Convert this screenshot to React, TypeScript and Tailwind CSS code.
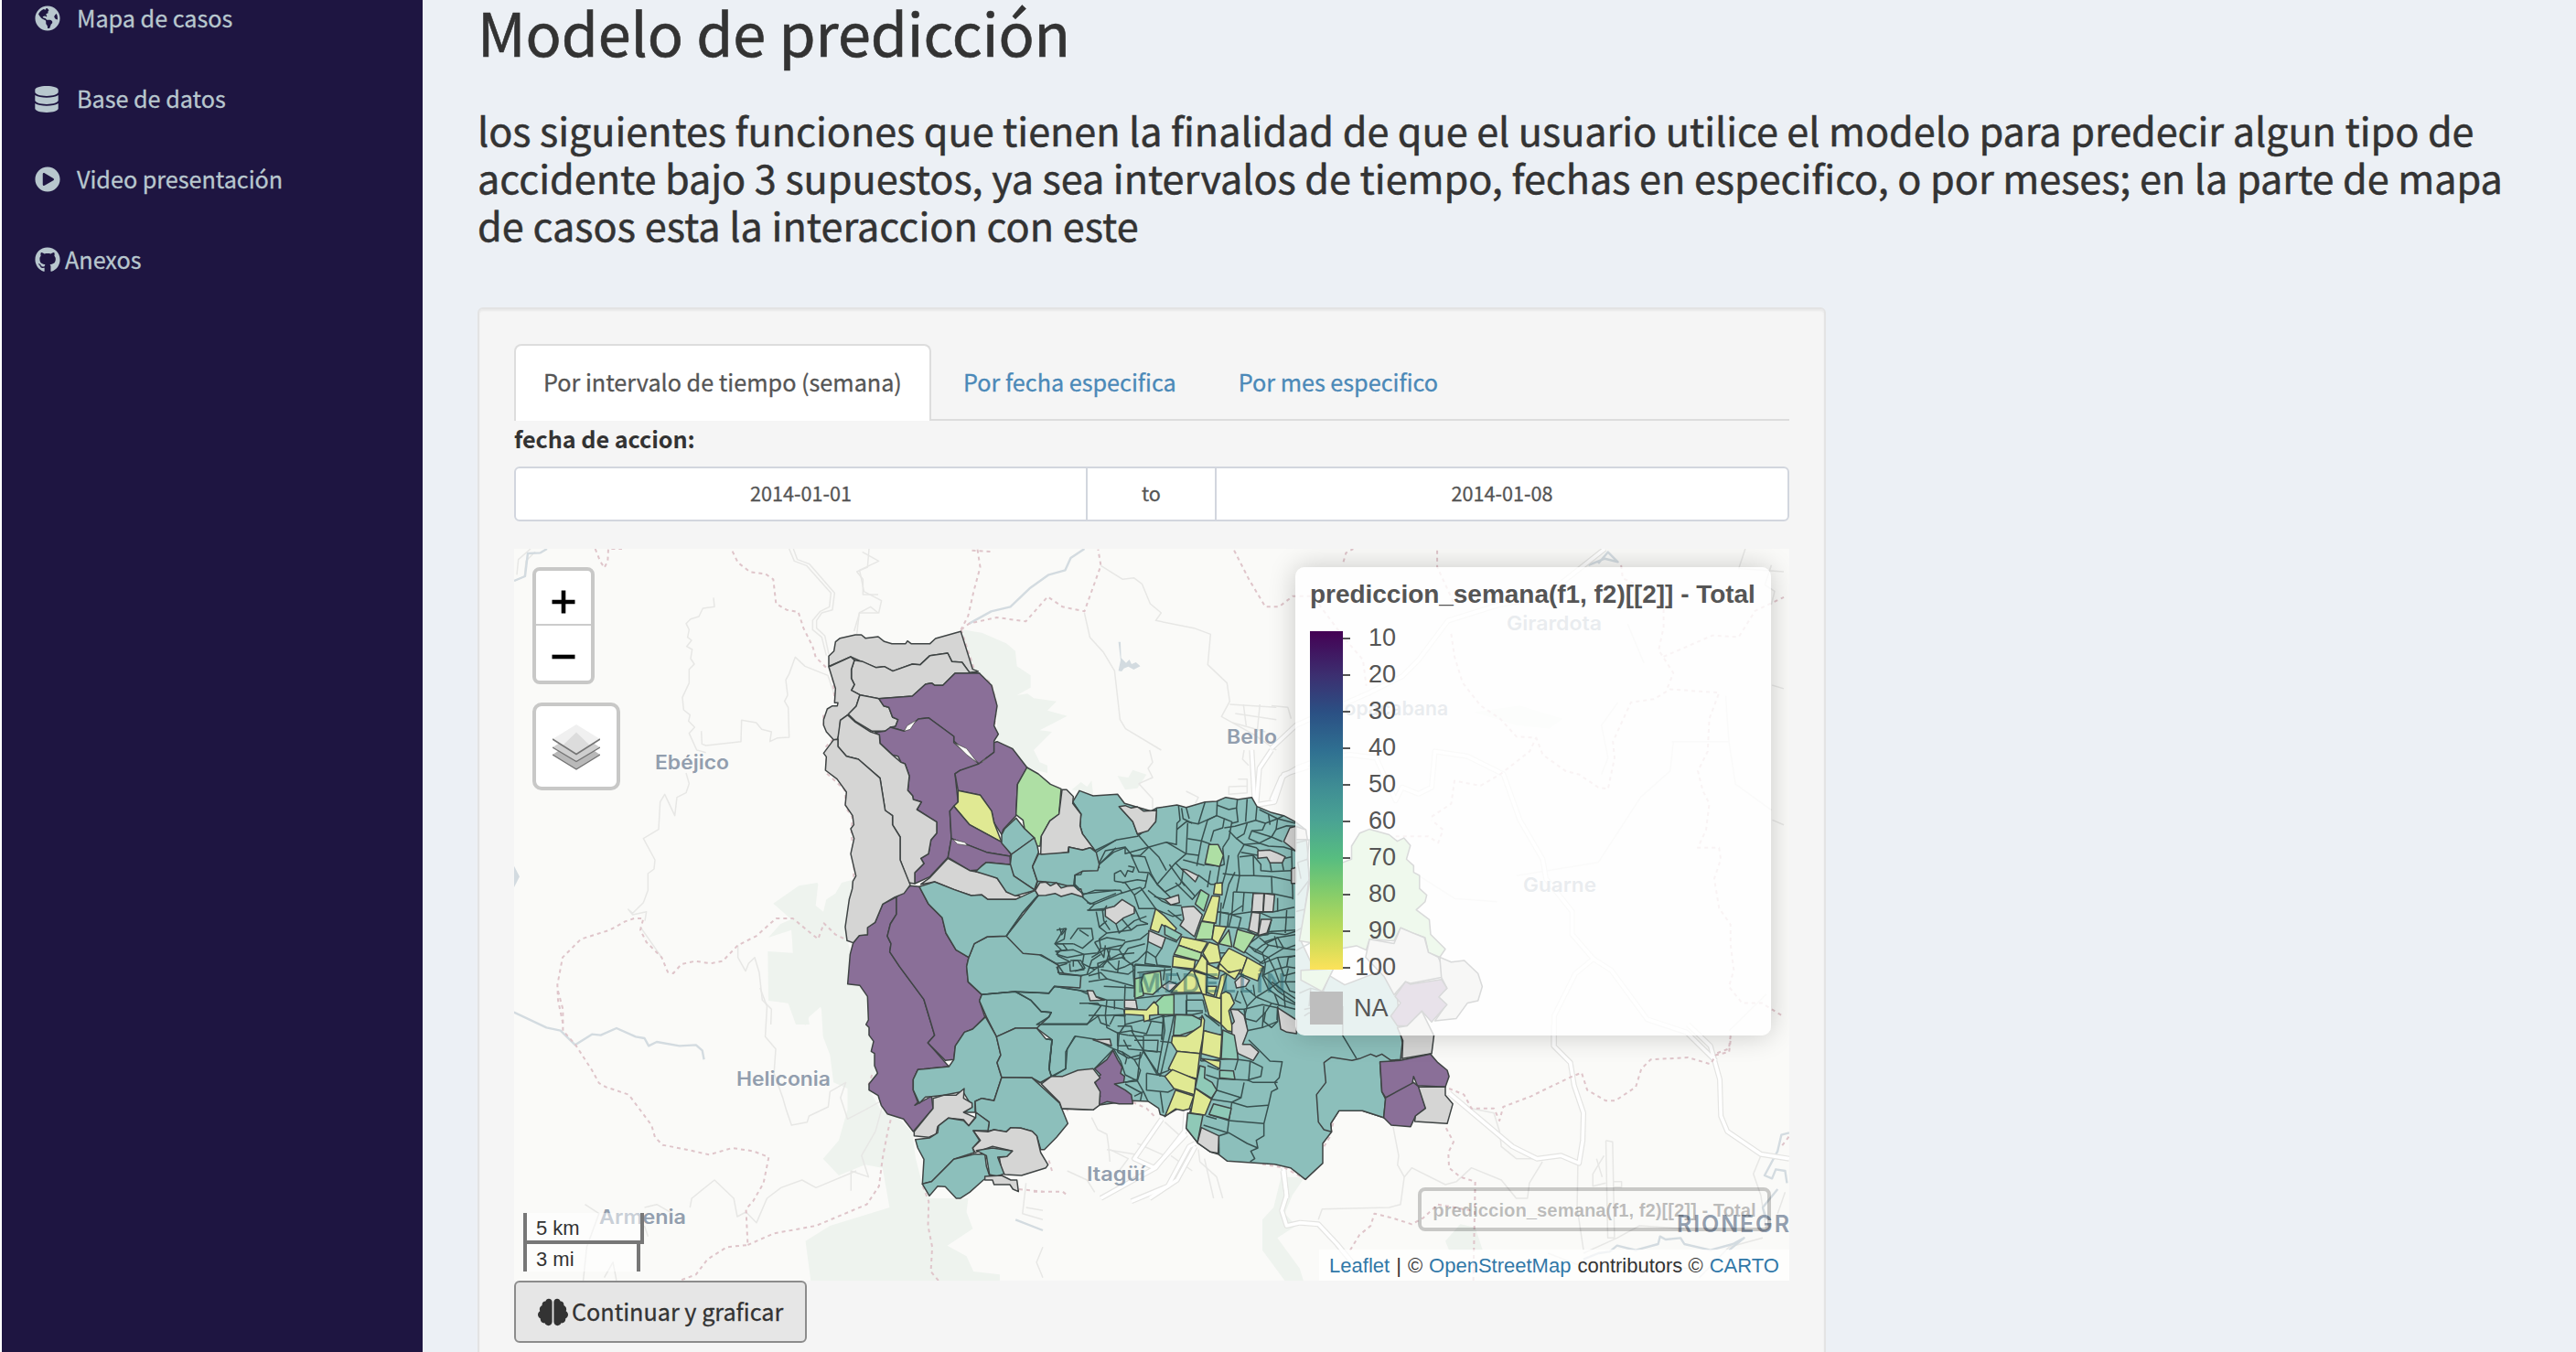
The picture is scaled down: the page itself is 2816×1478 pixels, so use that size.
import React from "react";
import { FaBrain, FaDatabase, FaGithub, FaGlobeAmericas, FaPlayCircle } from "react-icons/fa";

type Region = [string, string];

const TEAL = "#8cbfbb";
const PURPLE = "#8a6f98";
const GRAY = "#d5d5d4";
const YELLOW = "#e0e993";
const GREEN = "#aedfa4";
const MINT = "#8fc9b7";
const FERN = "#9ad8a8";

/* Each sheet of the map has its own local grid, placed with a transform. */
const NW = "translate(860 660) scale(.33333)";
const SW = "translate(860 960) scale(.33333)";
const N = "translate(1130 820) scale(.33333)";
const S = "translate(1130 1050) scale(.33333)";
const C = "translate(1190 950) scale(.33333)";
const E = "translate(1390 600) scale(.35714)";
const SE = "translate(1380 1120) scale(.40816 .33333)";
const W = "translate(560 600) scale(.33333)";
const TOP = "translate(520 320) scale(.59949 .33333)";
const BL = "translate(540 1080) scale(.38265 .33333)";

const base =
  "938,650 960,613 1005,630 1085,625 1108,655 1195,680 1213,670 1280,660 1310,668 1372,650 1410,648 1440,635 1480,642 1525,635 1542,665 1590,685 1630,695 1668,715 1702,741 1708,805 1713,902 1686,1105 1761,1266 1780,1220 1830,1250 1960,1200 2002,1287 2013,1406 2019,1440 2013,1495 1946,1500 1958,1685 1888,1663 1811,1663 1784,1705 1787,1732 1758,1770 1758,1835 1701,1888 1652,1850 1600,1838 1445,1828 1415,1805 1390,1798 1350,1770 1310,1720 1325,1657 1285,1655 1240,1680 1225,1675 1220,1655 1185,1632 1130,1630 1020,1645 1005,1660 902,1657 895,1638 832,1570 868,1550 860,1525 870,1430 820,1392 750,1272 860,1277 720,1090 825,957 815,940 822,912 806,862 835,822 1010,808 970,755 962,728 965,690";

const northWest: Region[] = [
  [GRAY, "138,205 138,172 155,155 160,125 175,113 225,102 245,102 258,113 300,108 320,124 345,131 390,131 396,122 408,131 470,131 488,114 571,91 610,215 628,222 600,226 575,192 542,190 528,162 470,170 438,200 412,198 348,221 320,206 292,209 250,192 210,174"],
  [GRAY, "222,185 250,190 292,209 320,206 348,221 412,198 438,200 470,170 528,162 542,190 575,192 600,226 632,228 552,228 512,268 486,268 475,260 455,264 412,303 302,311 240,299 212,284 222,265 212,245 212,215"],
  [GRAY, "138,207 210,174 222,185 212,215 212,245 222,265 212,284 240,299 228,336 200,365 176,382 172,430 166,445 154,446 130,420 121,398 121,380 133,345 150,335 166,335 168,325 157,325 160,278"],
  [GRAY, "240,299 302,311 318,335 335,340 347,372 365,380 357,402 322,418 280,418 225,385 202,362 228,336"],
  [PURPLE, "302,311 412,303 455,264 475,260 486,268 512,268 552,228 632,228 672,268 690,335 680,400 694,428 680,450 680,487 630,525 548,450 548,435 465,374 432,378 385,418 340,405 357,402 365,380 347,372 335,340 318,335"],
  [PURPLE, "290,422 322,418 340,405 385,418 432,378 465,374 548,435 548,455 630,525 610,540 570,546 552,558 562,650 535,680 540,770 529,832 470,895 420,918 420,882 450,852 440,835 465,820 473,775 492,752 492,716 427,675 442,650 415,642 413,630 397,612 402,565 388,525 375,520 365,500 347,496 306,458 304,432"],
  [PURPLE, "690,452 740,475 788,537 757,592 752,695 710,740 705,757 680,718 672,680 635,628 562,613 552,558 570,546 630,525 680,487 680,455"],
  [YELLOW, "562,613 635,628 672,680 680,718 705,782 600,725 548,664 562,650"],
  [PURPLE, "548,664 600,725 705,782 736,822 732,828 655,815 540,770 535,680"],
  [PURPLE, "540,770 655,815 732,828 734,856 655,848 640,860 630,873 600,875 529,832"],
  [GRAY, "200,365 225,388 275,420 304,430 306,458 347,496 375,520 388,525 402,565 397,612 413,630 415,642 442,650 427,675 492,716 492,752 473,775 465,820 440,835 450,852 420,882 420,918 400,915 372,840 372,765 347,725 347,695 323,678 306,572 235,510 196,500 168,468 168,440 176,382"],
  [GRAY, "154,446 168,445 168,468 196,500 235,510 306,572 323,678 347,695 347,725 372,765 372,840 405,922 385,950 355,962 315,985 290,1045 265,1062 265,1085 238,1088 218,1112 198,1105 192,1060 205,970 215,935 217,910 227,893 210,820 221,770 210,738 220,725 216,695 192,660 196,618 165,575 127,546 130,502 121,490"],
  [GREEN, "788,537 825,558 865,592 900,607 893,690 863,712 835,762 831,795 818,795 812,768 780,738 775,710 752,692 757,592"],
  [GRAY, "903,610 918,610 940,632 938,655 965,690 962,728 970,755 1010,808 995,800 970,808 925,798 922,815 850,825 833,822 835,762 863,712 893,690"],
  [GRAY, "529,835 600,875 655,885 690,900 722,945 770,962 750,970 660,970 640,955 605,957 550,938 485,912 440,920 470,898"],
  [TEAL, "705,757 715,738 752,703 780,738 812,768 737,822 705,785"],
  [TEAL, "737,822 812,768 822,795 826,815 806,862 822,910 812,938 745,893 732,865"],
  [TEAL, "655,848 734,856 745,893 815,940 750,958 720,945 690,900 620,878 640,860"],
  [TEAL, "835,822 925,815 925,798 970,808 995,800 1015,815 1025,855 1020,875 970,877 945,890 942,925 920,925 880,915 822,910 806,862 826,820"],
  [TEAL, "435,928 485,912 550,938 605,957 640,955 660,970 750,970 815,940 825,957 772,1015 720,1090 658,1092 615,1115 597,1160 555,1135 522,1080 510,1030 465,985"],
  [GRAY, "815,940 830,915 850,913 865,925 885,915 900,932 920,926 945,925 955,938 965,935 972,962 935,950 900,960 880,950 850,956 825,957"],
];

const southWest: Region[] = [
  [PURPLE, "360,62 360,118 340,150 330,190 342,215 338,242 370,290 450,398 485,515 463,540 532,618 430,628 415,660 415,695 430,735 420,745 475,715 480,755 415,831 383,790 330,773 310,745 300,713 270,695 270,675 298,640 288,615 288,575 277,568 285,535 270,515 270,490 260,480 268,465 265,388 240,352 200,347 208,250 218,212 238,187 265,185 265,160 290,145 315,85"],
  [PURPLE, "360,62 405,25 435,28 465,85 510,130 522,180 555,235 597,260 590,290 595,340 640,382 632,402 650,455 610,495 583,505 553,550 548,595 520,598 463,540 485,515 450,398 370,290 338,242 342,215 330,190 340,150 360,118"],
  [TEAL, "597,260 615,215 658,192 720,190 775,247 835,252 890,285 890,310 965,320 962,360 930,358 878,355 860,377 750,372 640,382 595,340 590,290"],
  [TEAL, "640,382 750,372 800,400 835,438 868,440 860,455 820,492 750,492 688,520 655,455 632,402"],
  [TEAL, "652,455 688,520 702,580 690,605 705,653 680,730 640,722 618,732 618,768 582,768 608,750 595,728 578,700 515,712 455,718 435,738 415,695 415,660 430,628 532,618 548,595 553,550 583,505 610,495"],
  [TEAL, "688,520 750,492 820,492 850,527 870,530 860,625 868,650 832,670 805,655 705,653 690,605 702,580"],
  [TEAL, "705,653 805,655 895,738 922,805 885,850 845,890 833,890 820,845 805,830 768,820 735,818 720,832 680,825 660,830 664,800 620,768 618,732 640,722 680,730"],
  [GRAY, "480,722 515,712 555,712 582,690 580,722 608,738 608,752 580,768 618,785 597,812 580,792 530,787 495,815 490,840 465,850 418,845 418,831 480,755"],
  [TEAL, "422,857 468,852 495,835 498,812 530,787 580,795 597,812 620,785 620,768 664,800 660,828 612,828 632,860 610,885 615,900 548,922 475,995 445,1003 450,922 430,885"],
  [TEAL, "445,1003 475,995 548,922 615,905 650,905 655,945 665,975 645,990 600,1030 570,1050 556,1050 520,1012 495,1010 468,1042"],
  [GRAY, "612,828 660,832 680,825 720,832 735,818 768,820 805,830 820,845 833,900 857,940 850,950 770,975 715,972 705,960 697,915 722,913 740,895 675,880 618,900 610,885 635,860"],
  [TEAL, "622,893 675,885 740,895 722,913 692,915 713,970 690,978 665,972 655,910"],
  [GRAY, "650,978 705,975 735,990 755,990 760,1028 742,1020 732,1005 680,1005 675,990 650,990"],
];

const north: Region[] = [
  [GRAY, "280,185 300,182 320,190 340,186 360,200 403,198 400,235 375,265 340,275 325,235"],
  [GREEN, "575,310 605,310 622,345 610,382 562,372"],
  [GRAY, "485,390 500,392 540,412 530,432"],
  [FERN, "548,458 575,475 558,528 530,505"],
  [YELLOW, "595,437 618,435 618,475 590,472"],
  [YELLOW, "585,478 610,480 597,568 552,560"],
  [GRAY, "485,515 525,512 553,540 527,612 480,575 492,555"],
  [GREEN, "550,562 592,568 585,620 530,622"],
  [YELLOW, "592,575 632,580 605,635 585,620"],
  [YELLOW, "400,520 430,545 468,585 460,598 420,572 410,598 382,588"],
  [GRAY, "378,592 432,615 420,650 375,628"],
  [MINT, "430,575 485,605 470,625 430,605"],
  [GREEN, "640,590 650,645 608,635"],
  [GREEN, "668,588 728,605 690,665 655,645"],
  [YELLOW, "485,612 570,630 550,665 475,640"],
  [GREEN, "475,640 550,665 545,692 460,670"],
  [YELLOW, "458,675 530,690 525,718 455,710"],
  [GRAY, "235,520 265,512 290,490 330,515 330,535 295,550 270,570 235,545"],
  [GRAY, "430,490 475,475 478,500 450,508"],
  [GRAY, "735,330 775,328 800,338 825,350 815,370 775,370 765,352 735,355"],
  [GRAY, "720,470 755,470 752,530 715,530"],
  [GRAY, "757,470 790,475 785,530 753,530"],
  [GRAY, "715,532 742,535 736,602 705,590"],
  [GRAY, "746,555 780,555 765,600 736,608"],
  [GRAY, "860,250 840,255 820,300 860,332"],
  [GRAY, "860,385 845,390 845,437 860,437"],
  [YELLOW, "575,630 605,640 615,695 575,700 555,665"],
  [YELLOW, "640,650 700,680 680,735 600,718 618,680"],
  [YELLOW, "700,680 752,710 735,757 680,735"],
];

const center: Region[] = [
  [FERN, "152,360 175,355 180,415 152,425"],
  [GREEN, "180,345 235,335 240,385 210,412 180,408 172,372"],
  [YELLOW, "338,332 385,345 385,405 270,405"],
  [GRAY, "240,385 265,368 290,378 265,402"],
  [YELLOW, "388,310 430,330 425,360 388,345"],
  [YELLOW, "345,330 372,282 388,300 388,345"],
  [YELLOW, "345,335 388,348 385,420 372,408"],
  [YELLOW, "435,350 455,340 430,428 418,420"],
  [YELLOW, "388,385 420,385 412,415 388,405"],
  [YELLOW, "425,330 440,335 480,362 500,330 460,340 430,310"],
  [FERN, "218,440 245,415 280,412 280,478 230,478"],
  [YELLOW, "118,460 190,462 215,435 228,450 228,478 200,480 200,495 182,500 180,480 118,476"],
  [GRAY, "118,430 155,430 160,460 118,455"],
  [YELLOW, "375,410 435,425 435,508 395,480"],
  [YELLOW, "435,410 450,402 465,410 478,440 460,465 475,535 455,530 435,510"],
  [GRAY, "465,460 490,462 510,480 522,530 515,550 505,575 530,575 558,600 540,628 490,605 470,560 470,510 478,500"],
  [GRAY, "480,370 500,350 528,365 515,385 485,390"],
  [MINT, "285,478 340,480 370,495 370,515 345,530 300,545 278,545"],
  [YELLOW, "372,480 380,495 375,550 365,605 290,598 272,570 275,548 320,548 368,515"],
  [YELLOW, "378,530 437,545 432,622 370,605"],
  [YELLOW, "290,598 365,605 355,688 295,672 262,655"],
  [YELLOW, "370,622 432,630 430,655"],
  [MINT, "440,528 478,545 488,605 490,625 435,622"],
];

const south: Region[] = [
  [YELLOW, "455,358 532,390 527,440 460,420 430,380"],
  [YELLOW, "465,425 525,445 510,487 490,492 465,487 430,512"],
  [YELLOW, "530,420 583,455 562,507 515,500"],
  [MINT, "505,500 555,507 537,597 500,550"],
  [MINT, "545,345 562,350 560,385 585,400 600,425 583,452 530,418"],
  [GRAY, "550,548 607,575 605,632 580,628 537,598"],
  [PURPLE, "260,295 275,325 290,350 285,370 298,380 295,400 265,405 300,425 320,440 325,470 280,470 240,463 210,475 218,445 198,390 220,375 200,355 240,325"],
  [GRAY, "25,405 58,380 95,380 145,360 195,355 218,385 200,400 218,430 215,475 195,490 92,485 85,465"],
  [GRAY, "195,260 250,258 255,280"],
  [GRAY, "175,98 195,100 205,120 232,130 185,132"],
  [GRAY, "800,155 862,195 862,240 830,235 810,225"],
  [MINT, "610,360 655,362 660,390 610,385"],
  [MINT, "590,470 648,485 640,522 575,505"],
];

const east: Region[] = [
  [GREEN, "245,950 245,910 270,870 300,858 360,875 385,895 405,885 425,908 413,950 435,970 435,990 453,1000 453,1040 475,1060 470,1080 443,1105 483,1135 487,1180 532,1225 515,1250 480,1235 470,1190 430,1175 395,1160 375,1200 300,1195 290,1228 260,1215 220,1222 85,1200 120,1000 218,960"],
  [GRAY, "300,1195 375,1208 395,1160 430,1175 468,1190 480,1235 510,1250 527,1285 520,1312 425,1330 410,1325 375,1365 345,1310 288,1250"],
  [GRAY, "515,1250 550,1265 590,1260 632,1300 645,1340 632,1383 600,1390 565,1438 500,1445 535,1395 510,1370 537,1345 520,1312"],
  [PURPLE, "410,1325 425,1333 520,1318 537,1345 512,1372 537,1395 490,1448 460,1415 415,1460 385,1460 365,1430 395,1390 378,1370"],
  [GRAY, "460,1415 497,1490 490,1545 400,1560 402,1505 385,1465 415,1460"],
  [GREEN, "90,1290 190,1285 155,1355 90,1320"],
  [GRAY, "75,850 105,860 110,890 75,890"],
];

const southEast: Region[] = [
  [TEAL, "165,125 185,107 240,118 260,112 290,97 305,105 320,97 345,118 370,118 315,125 320,220 330,245 325,305 268,283 205,283 183,325 185,352 165,345 150,320 145,230 170,190"],
  [PURPLE, "315,122 370,118 450,97 470,125 495,150 500,170 490,205 415,200 405,170 400,205 330,240 320,220"],
  [PURPLE, "330,240 405,190 420,205 437,275 410,300 397,335 345,330 325,305"],
  [GRAY, "418,205 490,205 490,232 510,260 495,325 408,318 410,300 437,275"],
];

const northLines = [
  "128,170 155,210 150,245 160,275 200,330 240,310 270,295 340,283 400,235 403,190",
  "200,330 215,385 158,398 155,408 135,410 135,440 150,455 165,475", "280,185 325,235 340,275 378,320",
  "215,370 235,330 300,318 300,340 378,318", "218,372 262,335 300,320", "378,318 435,302 475,325 500,340",
  "435,302 468,310 470,240 480,230 475,182", "485,190 490,225 520,240", "500,188 510,225", "500,340 465,370 405,440 385,405 365,350 320,345",
  "320,345 345,400 378,402 405,440 455,490 470,480", "300,318 325,348 350,345 378,318 410,350 435,395",
  "505,240 500,340 540,345", "505,290 550,298 535,380", "470,260 500,235 540,242 562,170", "540,242 600,215 602,168",
  "550,298 570,230 600,215 625,225 620,255 590,265 580,300", "600,180 640,195 665,190 668,162", "550,298 580,308",
  "625,225 650,235 640,290 620,320", "625,255 660,250 728,230 732,185", "665,190 670,235 650,240", "700,160 695,235",
  "700,240 690,275 665,290 640,265", "728,230 760,240 800,225 820,215", "760,240 750,262 715,265 705,290", "770,210 775,245", "740,195 800,225 858,240",
  "800,225 795,260 780,285 715,265", "795,260 830,248 858,250", "690,310 740,305 770,315 820,318 858,330", "705,290 740,305 780,285 815,300",
  "665,290 690,310 670,345", "670,345 675,412 620,405", "675,350 720,345 722,412 675,412 665,465", "680,335 735,345", "690,310 730,320 740,330",
  "722,412 780,415 845,428", "720,345 745,375 745,395 780,398 845,395", "775,370 780,398", "815,370 820,395", "780,415 782,470", "845,350 825,355", "845,300 850,490",
  "655,465 720,468 788,472 850,485", "655,465 650,540", "720,468 715,530 650,540 605,530", "690,465 685,530",
  "715,530 740,532 788,530 855,515", "740,532 780,550 855,548", "780,555 768,605 730,608 700,590",
  "650,540 640,580 685,585 710,590", "600,580 640,580", "830,525 825,600", "800,485 800,530",
  "465,370 490,395 485,430 530,480", "490,360 560,378", "540,410 580,440 600,440", "465,435 520,490 548,458",
  "405,440 430,465 480,440 485,430", "445,375 495,445", "560,375 610,380 600,440", "620,320 625,375 610,380", "640,345 630,400 610,470", "660,400 640,440 620,520", "580,395 570,450",
  "175,500 200,505 285,470 350,450", "160,475 200,460 285,460 290,470", "200,505 180,525 235,520",
  "265,430 265,405 285,395 300,415 308,395 325,400 330,385 310,380", "265,430 300,435 330,475 365,450 375,405", "290,435 340,425 370,430",
  "330,475 345,520 395,520 455,545 485,540", "350,450 400,520", "375,460 420,495 450,508 485,510", "440,525 485,560", "395,480 430,490",
  "205,530 215,580 240,600 320,590 340,575 375,570", "225,520 230,560 250,590", "240,600 215,620 220,650 280,655 300,630 350,620 375,600", "270,570 280,600 330,560 370,545", "330,515 350,560 375,570", "290,555 320,590",
  "75,590 105,585 100,620 70,635 130,635", "85,583 92,605 108,585", "120,620 145,585 190,585 195,620 160,650 130,635", "150,590 180,610", "215,580 240,560",
  "70,660 130,655 165,670 210,665 220,650", "70,635 90,655 75,670 110,680 165,670", "165,670 160,700 200,720 240,690 290,680 310,650 365,635", "120,690 145,690 165,720 120,725 118,700",
  "75,710 110,700", "80,705 100,735 150,740 180,735 200,720", "240,690 270,720 300,710 340,690 370,660 365,700 400,705", "200,630 230,680 235,640", "250,655 240,690 210,700 215,750", "175,735 190,690 220,670", "280,655 300,685", "290,680 330,710",
  "375,628 370,660 400,680 420,650", "400,680 405,705 450,710", "432,615 470,630", "378,592 375,628", "325,700 330,780", "330,705 450,712",
  "700,640 740,610 780,600 825,605 858,595", "690,660 750,700 800,680 858,675", "700,640 750,665 770,640 740,615", "770,640 830,650 858,640", "750,665 760,700 755,740", "800,680 820,740 858,730", "790,610 800,650",
];

const centerLines = [
  "575,240 620,225 678,215", "515,240 545,270 590,290 560,310", "545,215 600,205 678,200", "545,270 570,250 620,225 640,260 678,265",
  "590,290 640,260", "590,290 610,330 570,350 575,318", "610,330 650,320 655,290 678,285", "650,320 678,325", "570,350 590,395 550,420 515,390",
  "610,330 625,370 590,395", "625,370 678,370", "655,325 645,370 660,400 678,405", "550,420 600,440 678,460", "500,400 520,450 550,420", "490,400 480,430 500,440",
  "520,450 510,490 550,500 580,470 600,440", "580,470 575,500 600,520 620,500", "590,395 640,430 678,445", "540,380 545,415", "600,370 640,400 678,425", "575,350 620,400 678,440", "610,410 625,450", "640,400 645,455", "620,450 618,495",
  "435,110 430,185", "460,150 455,190", "470,150 500,160 490,200", "505,120 460,150", "418,140 460,145", "425,245 425,275 465,275",
  "272,320 340,332 320,360 290,378", "272,325 270,365", "250,325 245,365", "152,312 150,420", "152,312 270,322", "160,340 270,330", "290,340 300,365",
  "150,425 280,410 375,408", "322,412 322,478", "280,478 340,478 375,470", "322,430 375,430 385,470", "322,478 345,500 370,485", "388,355 420,360", "385,480 435,508 437,545",
  "240,485 280,480 270,530 235,680", "245,480 240,560", "180,495 245,505 240,560", "118,478 120,510 100,540 60,520 55,480 118,478", "120,510 180,495", "100,540 95,600", "180,545 240,545", "130,545 180,550 180,595 130,590 115,560",
  "180,595 240,600", "180,600 235,680", "100,540 130,545", "170,600 160,690 120,700", "95,600 130,620 170,610",
  "0,370 60,360 150,385", "50,385 150,390", "0,350 40,340 60,360", "60,300 100,280 150,275", "40,330 95,340 100,300", "95,340 130,345 150,330", "0,325 50,320", "60,260 70,290 45,320", "20,240 60,225 120,235", "10,290 60,260 110,250",
  "0,410 60,430 115,430", "0,440 115,460", "60,430 55,480 0,480", "85,430 85,460", "118,430 120,380",
];

const southLines = [
  "0,100 45,105 70,85 110,92 150,98 220,130", "0,165 55,170 20,210 5,225", "30,208 175,208 215,180", "0,225 30,258 60,260 50,370 58,382",
  "135,248 105,300 105,355 60,382", "135,248 200,258 262,290 200,355", "262,290 290,300 330,325 350,320 360,295 320,230 275,238 275,280 320,280",
  "0,388 22,402", "360,295 405,300 408,262 360,262 330,262", "360,295 405,375 440,362 470,330", "425,180 430,230 405,370", "330,325 350,360 340,395 290,400", "262,290 285,330 300,375 340,395",
  "370,370 405,375 440,382", "370,370 370,425 440,432 460,422", "340,395 360,430 375,462", "300,405 355,435 350,460", "415,430 425,500", "360,430 330,445",
  "380,195 430,180", "320,230 370,240 385,200", "250,210 265,180 300,182 295,160", "210,180 220,205 250,215", "275,215 320,215 325,235", "415,265 460,270", "470,295 545,305", "290,300 305,320 300,340",
  "548,330 612,325 670,320", "545,345 530,420", "570,345 605,358 610,330", "565,375 605,388 600,425 583,455", "605,388 700,392 745,380 750,350 710,330 670,325 660,360",
  "710,330 705,392", "600,425 680,450 690,400", "583,455 650,465 680,450", "650,465 640,525 575,505", "650,465 700,480 768,475", "640,525 635,565 557,540", "565,510 600,520",
  "640,525 755,535", "607,575 640,565 700,600 735,615 730,590 755,575 755,535 770,475 780,430 800,420 790,400 805,385 815,332 775,330 740,295", "607,575 608,635",
  "735,615 712,625 725,650 710,660", "700,392 720,400 800,400", "612,240 612,325", "555,185 548,330", "562,230 615,250", "650,160 690,160 750,145 800,155", "690,160 700,230 750,220 755,150", "750,220 800,200 800,155",
  "560,175 610,215", "500,165 555,165", "500,130 500,200 550,195", "465,180 460,240", "740,295 705,260",
];

const eastLines = [
  "75,900 115,890 110,950 80,960", "110,950 118,1010 80,1060", "80,960 90,1010", "75,1110 115,1100 110,1150 75,1170", "75,1230 130,1200 160,1230", "85,1360 120,1345 160,1355 145,1400 100,1410", "120,1345 115,1400", "160,1355 190,1380", "100,1430 115,1420 160,1440", "218,1400 218,1490 260,1560",
];

const borders: [string, string[]][] = [
  [W, [
    "722,8 740,45 780,76 830,82 856,100 865,180 900,200 938,207 955,260 985,320 995,355 1035,395",
    "272,0 288,40 302,62 313,40 315,0 360,0",
    "166,1556 150,1480 148,1430 165,1340 225,1280 320,1250 370,1222 400,1212 430,1212 420,1250 440,1290 490,1340 510,1388 528,1392 555,1362 600,1352 650,1360 690,1352 740,1300 800,1270 865,1212 920,1212 1003,1280 1022,1228 1060,1265 1095,1282",
    "1048,400 1058,500", "1020,545 1022,590", "1028,650 1050,625", "1030,690 1030,735 1090,790 1095,850 1115,880 1112,940 1122,1000 1116,1180 1095,1240",
  ]],
  [BL, [
    "183,10 197,70 197,140 232,185 280,270 300,312 320,325 385,350 450,450 460,490 482,515 550,530 615,547 680,525 740,535 785,555 770,640 740,700 720,725 725,843 665,850 610,890 577,940 530,960",
    "725,843 800,805 920,780 1065,710 1100,650 1110,560 1125,470 1135,425", "1225,650 1242,700 1240,780 1252,850 1248,930 1270,960", "1080,285 1070,320",
    "1500,660 1568,668",
  ]],
  [TOP, [
    "915,842 920,900 908,980 898,1060 885,1105", "905,845 945,850", "885,1105 900,1085 950,1065 1003,1078 1043,997 1070,1030 1110,1045 1140,895 1135,842",
    "1383,845 1410,940 1440,1030 1465,1030 1490,995 1530,995", "885,1105 910,1240 940,1280 950,1350 945,1440",
  ]],
  [E, [
    "220,40 228,12 250,0", "507,5 507,55 560,170", "145,170 220,270 280,340 290,420", "550,260 560,330 585,410 640,480 700,520 750,575 810,578 830,630 900,680 940,690 1000,730 1030,735 1050,640 1045,590 1100,470 1170,460 1220,430 1370,440 1340,520 1335,620 1305,680 1320,740 1340,780 1330,860 1305,915 1370,915 1375,950 1355,1010 1370,1100 1405,1150 1405,1210 1415,1290 1400,1340 1440,1390 1500,1390 1568,1432",
    "1200,330 1350,265 1430,270 1480,190 1568,148", "490,820 550,780 560,710 640,725 700,690 790,620 810,578", "1070,50 1075,90 1140,120 1200,180 1200,240 1185,310 1230,380 1210,430", "1405,1490 1400,1530 1360,1545", "380,880 480,880 510,900 525,860 490,830",
  ]],
  [SE, [
    "500,210 540,230 560,275 620,275 635,315 645,270 720,235 770,205 830,170 855,158 870,215 920,250 945,250 1000,205 1015,145 1040,115 1140,108 1200,130 1215,100 1250,90 1255,40",
    "492,340 512,385 498,420 500,470 530,500 570,515 565,840", "235,740 260,690 290,660 300,620 350,635 400,655 430,635 470,590 560,610", "165,400 180,370 190,320", "0,458 60,470 120,510", "1410,368 1390,400",
  ]],
  [S, ["325,465 370,485 400,515", "0,758 95,758 110,770", "60,690 48,650", "92,510 112,490"]],
];

const minor: [string, string[]][] = [
  [W, [
    "660,160 663,190 625,195 612,222 585,230 570,245 580,265 575,290 588,300 572,320 590,330 585,360 597,378 580,395 580,440 558,487 562,528 583,545 578,565 598,585 580,605 605,660 635,668", "620,598 622,640 635,645 750,632 752,562 800,570 818,592 850,600 845,632 870,620 908,618 905,520 893,500 903,480 897,430 908,410 928,355 960,385 1035,415 1060,490",
    "570,735 580,770 570,800 540,815 533,875 500,805 485,830 480,920 430,950 468,1020 465,1050 445,1065 445,1120 430,1160 395,1195 380,1182 395,1200 440,1190 435,1220", "740,1300 740,1340 765,1385 775,1360 795,1340 810,1390 820,1480 850,1510 848,1560",
    "908,0 925,40 965,55 1045,145 1040,190 1010,205 985,235 985,265 1015,290 1030,350", "922,0 935,35 975,50 1057,145 1050,200 1015,210 998,235 998,260 1025,285 1038,345",
    "1170,0 1165,60 1130,75 1150,100 1150,150 1200,150", "1200,210 1175,190 1138,210 1130,280",
    "60,0 20,35 15,85", "75,10 45,40 40,90 8,105", "420,1240 490,1340",
  ]],
  [BL, [
    "760,0 780,60 775,160 805,200 800,280 825,360 835,400 850,450 895,440 900,420 955,390 960,340 1005,310 990,360 1010,430 1060,400 1115,365 1090,470 1050,550 1070,620 1020,600 1020,665", "560,720 565,690 630,630 685,690 695,750 720,735 750,770 780,690 820,655 880,630 920,655 1035,600",
    "260,710 300,740 265,850 255,960", "315,950 340,900 350,960", "430,720 465,710 510,740", "430,780 440,815",
    "1520,640 1510,740 1568,760", "1520,720 1568,730", "1568,850 1550,900 1568,950",
  ]],
  [TOP, [
    "705,850 735,880 700,910 708,980 740,1010 735,1050 700,1050 690,1110", "1110,1050 1120,1130 1145,1180 1165,1240 1175,1400 1185,1430 1250,1500", "1140,895 1180,940 1200,935 1215,955 1230,1020 1250,1050 1240,1075 1310,1100 1340,1120 1335,1220 1370,1280 1375,1340 1360,1390 1420,1450 1460,1500",
    "1375,1350 1460,1360", "1385,1380 1460,1400", "1400,1350 1405,1420", "1430,1350 1425,1440", "1380,1410 1440,1440",
  ]],
  [SE, [
    "350,335 365,430 362,460 380,500 370,590 340,600 160,605 150,640", "380,500 400,470 490,525 520,515 560,470 640,510 680,570 710,570 715,520 750,450", "560,275 620,290 635,350 640,400 680,440 735,440", "845,460 843,600 860,740", "1335,430 1315,490 1335,560 1350,680", "860,750 950,700 1010,660 1130,670",
    "920,380 925,700 943,700 938,385 920,380", "915,430 885,490 885,530 920,520", "895,440 910,500", "940,515 962,515 962,533 940,533", "1250,20 1350,-100", "1400,550 1380,620", "765,750 850,790 1150,800", "1170,830 1250,730 1340,700",
  ]],
  [N, ["380,0 390,40 375,60 390,90 345,110 390,160 390,195", "500,135 540,155 530,175", "670,95 700,95 700,140 640,145 640,120 700,118", "690,0 685,30 705,50"]],
  [S, ["190,515 210,555 240,570 245,605 250,660", "240,620 330,635", "110,690 175,720 200,760", "430,530 480,575", "540,620 545,660 600,710 620,780", "340,600 430,640", "450,640 520,690", "560,650 590,780", "250,620 310,650 280,690"]],
  [E, [
    "1450,0 1430,60 1568,70", "1530,50 1510,110 1540,130 1530,170", "1532,417 1568,428", "1533,830 1568,845", "0,480 50,485 60,520", "1090,230 1140,350", "1010,690 1030,640 1010,540 1060,470", "1230,590 1220,680 1130,760 1000,960 750,1000", "1400,590 1420,720 1530,800", "450,1000 560,1070 690,1080", "1225,590 1400,590 1390,450",
  ]],
];

const major: [string, string[]][] = [
  [SE, ["500,225 670,400 735,440 800,430 848,455 858,380 860,290 835,200 825,125 780,70 780,0", "1140,0 1200,70 1225,180 1228,300 1245,350 1335,425 1411,440", "55,480 65,560 52,610 65,660 100,650 150,655 200,720 240,780"]],
  [S, ["420,520 330,650 395,680 500,570", "500,490 495,560 400,680 220,780", "530,600 510,610 440,740 320,790", "530,610 470,720 380,780", "820,680 830,780"]],
  [N, ["715,0 725,180", "780,0 740,60 730,180 790,170 820,80 900,55"]],
  [E, ["0,770 30,700 80,670 160,640 240,630 320,640 380,770 400,730 450,750 490,730 500,620 600,635 710,690 760,830 830,950 840,1010 920,1110 920,1180 985,1255 930,1300 865,1430 865,1520", "985,1255 1040,1290 1150,1440 1270,1480 1360,1568", "0,610 75,540 300,440 400,390 450,340 540,220 700,170 830,150 1020,0"]],
];

const water: [string, string[]][] = [
  [TOP, ["1110,840 1085,870 1075,910 1045,925 1010,970 975,1030 940,1045 900,1085", "130,840 118,853 95,855 90,930 70,945"]],
  [BL, ["57,80 150,130 190,140 232,187 280,152 305,155 350,132 405,160 430,165 442,190 465,177 530,190 577,187 595,205 600,235", "1490,760 1568,795"]],
  [SE, ["860,770 900,750 930,745 950,725 1000,740 1060,720 1065,695 1080,705 1120,700 1130,720 1200,740 1260,720 1290,700 1250,740", "1411,355 1390,362 1380,415 1345,495 1365,505 1375,475 1400,480 1405,520", "1380,540 1340,600 1350,640"]],
  [E, ["1000,45 1030,10 1060,40 1020,30 970,50"]],
];

const parks: Region[] = [
  [W, "856,1163 940,1105 1000,1095 1003,1100 995,1170 1020,1190 1030,1150 1060,1130 1080,1095 1116,1085 1112,1180 1092,1240 1097,1282 1110,1320 1100,1425 1140,1435 1165,1480 1165,1560 1080,1560 1030,1550 1010,1500 970,1535 975,1560 930,1560 905,1490 840,1480 838,1320 920,1325 918,1285 915,1250 840,1275 880,1230 915,1215"],
  [BL, "784,0 1045,0 1065,30 1085,170 1095,290 1075,340 1105,400 1160,430 1195,475 1205,560 1225,650 1245,690 1330,690 1355,690 1350,735 1368,790 1295,845 1350,880 1370,930 1445,940 1445,960 905,960 890,830 960,780 1130,720 1110,590 1060,580 985,615 940,560 985,500 1010,400 1010,330 970,310 960,220 940,160 935,60 900,95 890,122 860,100 845,50 784,42"],
  [NW, "575,85 640,95 720,130 750,155 755,205 800,235 800,275 755,300 790,295 810,310 885,320 855,350 920,368 830,415 870,420 810,480 830,520 855,530 855,555 790,540 690,450 690,335 632,228 605,215"],
  [NW, "935,610 965,585 985,600 1000,580 1005,625"],
  [SE, "490,710 530,655 570,665 590,740 500,740"],
  [SE, "30,600 50,500 100,500 130,470 80,560 60,620 90,660 40,700 100,800 110,840 60,840 0,740 0,640"],
  [N, "275,85 310,90 325,65 370,80 340,125 300,130"],
  [E, "620,500 760,480 890,520 850,550 750,540"],
];

function Regions({ at, items }: { at: string; items: Region[] }) {
  return (
    <g transform={at} strokeWidth="1.5" stroke="#3f4444" strokeLinejoin="round">
      {items.map(([fill, points], i) => (
        <polygon key={i} points={points} fill={fill} vectorEffect="non-scaling-stroke" />
      ))}
    </g>
  );
}

function Lines({ at, items, stroke, width, dash }: { at: string; items: string[]; stroke: string; width: number; dash?: string }) {
  return (
    <g transform={at} fill="none" stroke={stroke} strokeWidth={width} strokeDasharray={dash} strokeLinejoin="round">
      {items.map((points, i) => (
        <polyline key={i} points={points} vectorEffect="non-scaling-stroke" />
      ))}
    </g>
  );
}

const towns: [string, number, number, number][] = [
  ["Ebéjico", 716, 841, 81],
  ["Heliconia", 805, 1187, 103],
  ["Armenia", 655, 1338, 95],
  ["Bello", 1341, 813, 55],
  ["Itagüí", 1188, 1291, 64],
  ["Girardota", 1647, 689, 104],
  ["Copacabana", 1454, 782, 129],
  ["Guarne", 1665, 975, 80],
];

function MapCanvas() {
  return (
    <svg viewBox="562 600 1394 800" className="block h-[800px] w-[1394px]">
      <rect x="562" y="600" width="1394" height="800" fill="#fafaf8" />
      {parks.map(([at, points], i) => (
        <polygon key={i} transform={at} points={points} fill="#eef3ee" />
      ))}
      {minor.map(([at, items], i) => <Lines key={i} at={at} items={items} stroke="#e7e7e5" width={1.5} />)}
      {water.map(([at, items], i) => <Lines key={i} at={at} items={items} stroke="#d3dbe0" width={2.4} />)}
      <polygon transform={TOP} points="1172,1145 1176,1145 1177,1198 1186,1214 1192,1203 1196,1218 1204,1212 1212,1225 1200,1236 1190,1226 1182,1232 1178,1242 1172,1240 1176,1205" fill="#d3dbe0" />
      <polygon transform={W} points="6,1040 24,1075 6,1110" fill="#d3dbe0" />
      {major.map(([at, items], i) => <Lines key={i} at={at} items={items} stroke="#e4e4e2" width={6} />)}
      {major.map(([at, items], i) => <Lines key={i} at={at} items={items} stroke="#ffffff" width={3.6} />)}
      {borders.map(([at, items], i) => <Lines key={i} at={at} items={items} stroke="#dfc5ca" width={2} dash="4 4" />)}

      <Regions at={NW} items={[[TEAL, base]]} />
      <Lines at={N} items={northLines} stroke="#38504f" width={1.5} />
      <Lines at={C} items={centerLines} stroke="#38504f" width={1.5} />
      <Lines at={S} items={southLines} stroke="#38504f" width={1.5} />
      <Lines at={E} items={eastLines} stroke="#38504f" width={1.5} />
      <Regions at={SW} items={southWest} />
      <Regions at={NW} items={northWest} />
      <Regions at={N} items={north} />
      <Regions at={C} items={center} />
      <Regions at={S} items={south} />
      <Regions at={E} items={east} />
      <Regions at={SE} items={southEast} />
      <Lines at={SW} items={["750,372 800,400 835,438 868,440 860,455 820,480 985,480 1030,420 1020,410 960,410", "830,252 885,280 930,275 890,255 885,240 920,235 905,215 880,215 910,165", "885,290 895,315 970,320", "720,190 772,115 825,55", "640,382 745,373 860,377 878,355 985,372", "940,290 940,270 965,270 978,295 945,305", "850,527 870,530 860,625 868,650 915,625 920,560 948,517"]} stroke="#38504f" width={1.5} />
      <Lines at={NW} items={["945,890 942,925 972,952 1080,940", "1015,815 1080,775", "1025,855 1080,800", "970,962 995,985 1080,950", "985,1005 1040,1005 1050,990"]} stroke="#38504f" width={1.5} />

      <g transform={NW} fill="#fafaf8" stroke="#444" strokeWidth="2">
        <polygon points="385,418 395,400 425,382 405,412" />
        <polygon points="553,458 590,475 626,522 590,495" />
        <polygon points="545,773 585,783 592,793 560,788" />
        <polygon points="637,522 655,503 645,517" />
      </g>

      <g fontFamily="Inter, sans-serif" fontWeight="600" fontSize="21" fill="#929eae">
        {towns.map(([name, x, y, w]) => (
          <text key={name} x={x} y={y} textLength={w} lengthAdjust="spacingAndGlyphs">{name}</text>
        ))}
        <text x="1833" y="1347" fontSize="25" textLength="123">RIONEGR</text>
      </g>
      <text x="1243" y="1085" fontFamily="Inter, sans-serif" fontSize="28" fontWeight="600" fill="#1f5a63" opacity=".45" textLength="162">MEDELLÍN</text>
    </svg>
  );
}

function LayersIcon() {
  return (
    <svg viewBox="0 0 52 52" className="size-[52px]">
      <path d="M0 35 26 18 52 35 26 51Z" fill="#b9b9b9" />
      <path d="M0 35 26 51 52 35" fill="none" stroke="#747474" strokeWidth="1.4" />
      <path d="M0 27 26 11 52 27 26 42.500Z" fill="#cfcfcf" />
      <path d="M0 27 26 42.500 52 27" fill="none" stroke="#747474" strokeWidth="1.4" />
      <path d="M0 18 26 2 52 18 26 34.500Z" fill="#f0f0f0" />
      <path d="M11 25 26 10.500 41 25 26 34.500Z" fill="#dcdcdc" />
      <path d="M0 18 26 34.500 52 18" fill="none" stroke="#747474" strokeWidth="1.6" />
    </svg>
  );
}

function Legend() {
  const ticks = [10, 20, 30, 40, 50, 60, 70, 80, 90, 100];
  return (
    <div className="absolute left-[854px] top-[20px] h-[512px] w-[520px] rounded-[10px] bg-white/80 px-4 text-[#555] shadow-[0_0_30px_rgba(0,0,0,0.2)]">
      <div className="h-[70px] whitespace-nowrap pt-[13px] text-[28px] font-bold leading-[34px] tracking-[-0.03px]">prediccion_semana(f1, f2)[[2]] - Total</div>
      <div className="flex h-[370px]">
        <div className="w-[36px] bg-[linear-gradient(#440154,#3c2f70_13%,#2b5084_24%,#2f6f91_35%,#3f8d94_46%,#4aa393_56%,#57bd80_67%,#83cc6b_77%,#bedb58_89%,#fde25a)]" />
        <ul className="-mt-[12px] w-[58px]">
          {ticks.map((t) => (
            <li key={t} className="flex h-10 items-center">
              <span className="h-[2px] w-2 shrink-0 bg-[#555]" />
              <span className="-mt-[2px] w-[50px] text-right text-[27px] leading-[40px]">{t}</span>
            </li>
          ))}
        </ul>
      </div>
      <div className="mt-6 flex h-9 items-center gap-3 text-[27px]">
        <span className="size-9 bg-[#bebebe]" />
        <span>NA</span>
      </div>
    </div>
  );
}

function LeafletMap() {
  return (
    <div className="relative mt-[30px] h-[800px] w-[1394px] overflow-hidden font-['Liberation_Sans',Arial,sans-serif]">
      <MapCanvas />
      <div className="absolute left-5 top-5 flex h-[128px] w-[68px] flex-col rounded-lg border-4 border-[#c8c8c7] bg-white">
        <div className="flex h-[60px] items-center justify-center border-b-2 border-[#ccc] pt-[9px]">
          <svg viewBox="0 0 26 26" className="size-[26px]"><path d="M13 .5v25M.5 13h25" stroke="#000" strokeWidth="4.600" /></svg>
        </div>
        <div className="flex h-[60px] items-center justify-center pt-[8px]">
          <svg viewBox="0 0 26 26" className="size-[26px]"><path d="M.5 13h25" stroke="#000" strokeWidth="4.600" /></svg>
        </div>
      </div>
      <div className="absolute left-5 top-[168px] flex size-[96px] items-center justify-center rounded-[10px] border-4 border-[#c8c8c7] bg-white">
        <LayersIcon />
      </div>
      <Legend />
      <div className="absolute left-[988px] top-[698px] flex h-[48px] w-[386px] items-center justify-center whitespace-nowrap rounded-lg border-4 border-black/20 pt-[2px] text-[20.300px] font-bold text-black/25">
        prediccion_semana(f1, f2)[[2]] - Total
      </div>
      <div className="absolute bottom-0 right-0 flex h-[34px] w-[514px] items-center justify-center gap-[7px] whitespace-nowrap bg-white/70 text-[22px] text-[#333]">
        <span className="text-[#3178a8]">Leaflet</span><span>|</span><span>©</span><span className="text-[#3178a8]">OpenStreetMap</span><span>contributors ©</span><span className="text-[#3178a8]">CARTO</span>
      </div>
      <div className="absolute left-[10px] top-[726px] text-[22px] text-[#333]">
        <div className="flex h-[34px] w-[132px] items-center border-4 border-t-0 border-[#777] bg-white/50 pl-[10px] pt-[3px]">5 km</div>
        <div className="flex h-[30px] w-[128px] items-center border-x-4 border-[#777] bg-white/50 pl-[10px] pt-[2px]">3 mi</div>
      </div>
    </div>
  );
}

const nav = [
  { label: "Mapa de casos", Icon: FaGlobeAmericas, icon: "w-[28px] h-[28px]", gap: "w-[46px]" },
  { label: "Base de datos", Icon: FaDatabase, icon: "w-[26px] h-[29px]", gap: "w-[46px]" },
  { label: "Video presentación", Icon: FaPlayCircle, icon: "w-[28px] h-[28px]", gap: "w-[46px]" },
  { label: "Anexos", Icon: FaGithub, icon: "w-[28px] h-[28px]", gap: "w-[33px]" },
];

export default function App() {
  return (
    <div className="flex h-[1478px] w-[2816px] overflow-hidden bg-[#ecf0f5] font-['Noto_Sans_CJK_SC',sans-serif] text-[25.200px] text-[#333]">
      <aside className="w-[462px] shrink-0 border-l-2 border-white bg-[#1e1541] pl-[36px] text-[#b8c7ce]">
        <nav className="-mt-[24px] [-webkit-text-stroke:0.3px]">
          {nav.map(({ label, Icon, icon, gap }) => (
            <a key={label} className="flex h-[88px] items-center whitespace-nowrap tracking-[-0.02px]">
              <span className={gap}><Icon className={icon} /></span>
              {label}
            </a>
          ))}
        </nav>
      </aside>

      <main className="pl-[60px]">
        <h1 className="h-[70px] text-[64.800px] leading-[68px] tracking-[-0.12px] [-webkit-text-stroke:0.6px]">Modelo de predicción</h1>
        <h3 className="mt-[45px] whitespace-nowrap text-[43.200px] leading-[52px] tracking-[-0.045px] [-webkit-text-stroke:0.5px]">
          <span className="tracking-[-0.065px]">los siguientes funciones que tienen la finalidad de que el usuario utilice el modelo para predecir algun tipo de</span><br />
          accidente bajo 3 supuestos, ya sea intervalos de tiempo, fechas en especifico, o por meses; en la parte de mapa<br />
          <span className="tracking-[0.02px]">de casos esta la interaccion con este</span>
        </h3>

        <section className="mt-[65px] h-[1200px] w-[1474px] rounded-md border-2 border-[#e3e3e3] bg-[#f5f5f5] px-[38px] pt-[38px] shadow-[inset_0_2px_2px_rgba(0,0,0,0.05)]">
          <div className="flex h-[84px] w-[1394px]">
            <div className="w-[456px] whitespace-nowrap rounded-t-lg border-2 border-b-0 border-[#ddd] bg-white pl-[30px] leading-[79px] text-[#555] [-webkit-text-stroke:0.3px]">Por intervalo de tiempo (semana)</div>
            <div className="flex grow gap-[68px] border-b-2 border-[#ddd] pl-[35px] leading-[83px] text-[#4b89b8] [-webkit-text-stroke:0.3px]">
              <span>Por fecha especifica</span>
              <span>Por mes especifico</span>
            </div>
          </div>
          <div className="h-[38px] font-bold leading-[38px] tracking-[-0.06px]">fecha de accion:</div>
          <div className="mt-3 flex h-[60px] w-[1394px] rounded-md border-2 border-[#d2d6de] bg-white text-center text-[21.600px] leading-[54px] text-[#555] [-webkit-text-stroke:0.3px]">
            <div className="w-[623px]">2014-01-01</div>
            <div className="w-[143px] border-x-2 border-[#d2d6de]">to</div>
            <div className="grow">2014-01-08</div>
          </div>
          <LeafletMap />
          <button className="flex h-[68px] w-[320px] items-center gap-[4px] whitespace-nowrap rounded-md border-2 border-[#8c8c8c] bg-[#e6e6e6] pl-[24px] [-webkit-text-stroke:0.3px]">
            <FaBrain className="h-[33px] w-[33px]" />
            Continuar y graficar
          </button>
        </section>
      </main>
    </div>
  );
}
